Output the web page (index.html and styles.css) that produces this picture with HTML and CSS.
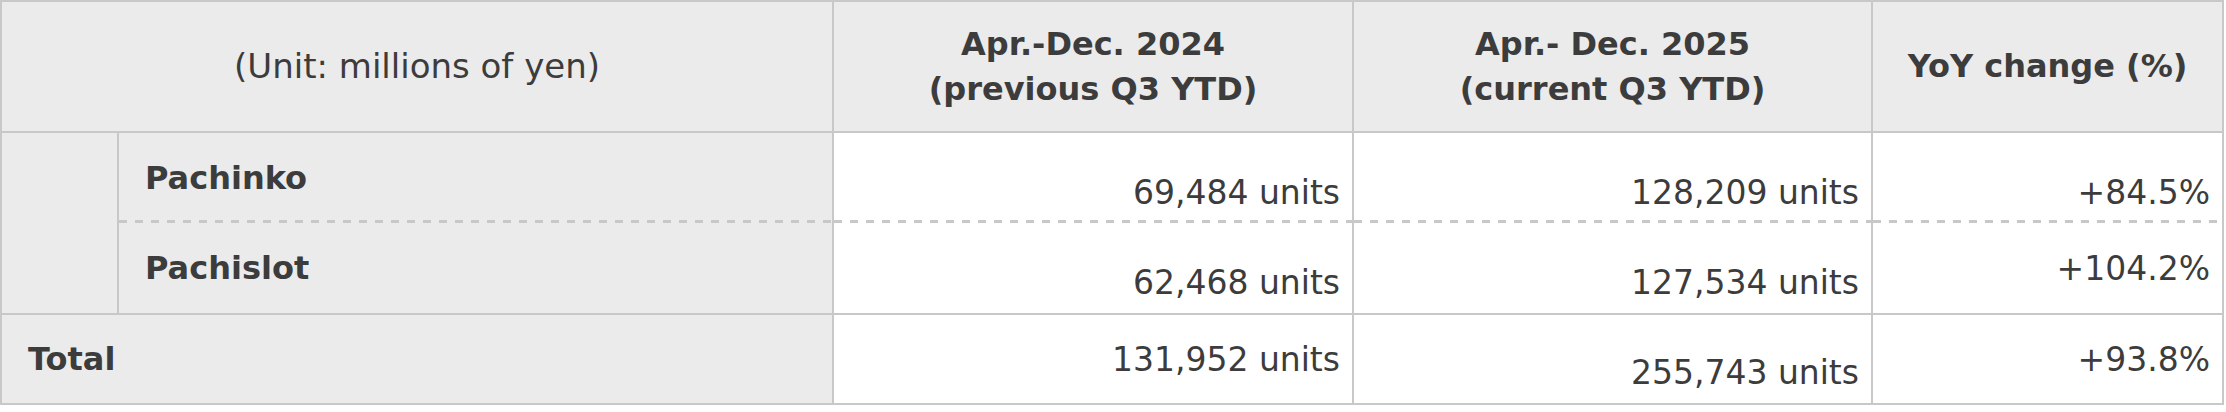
FILE: index.html
```html
<!DOCTYPE html>
<html lang="en">
<head>
<meta charset="utf-8">
<title>Unit sales</title>
<link rel="stylesheet" href="styles.css">
</head>
<body>
<table class="sales">
  <colgroup>
    <col class="c-indent">
    <col class="c-label">
    <col class="c-prev">
    <col class="c-cur">
    <col class="c-yoy">
  </colgroup>
  <thead>
    <tr class="head-row">
      <th colspan="2" class="unit">(Unit: millions of yen)</th>
      <th>Apr.-Dec. 2024<br>(previous Q3 YTD)</th>
      <th>Apr.- Dec. 2025<br>(current Q3 YTD)</th>
      <th>YoY change (%)</th>
    </tr>
  </thead>
  <tbody>
    <tr class="row sub first">
      <td rowspan="2" class="indent"></td>
      <td class="label">Pachinko</td>
      <td class="num low">69,484 units</td>
      <td class="num low">128,209 units</td>
      <td class="num low">+84.5%</td>
    </tr>
    <tr class="row sub second">
      <td class="label">Pachislot</td>
      <td class="num low">62,468 units</td>
      <td class="num low">127,534 units</td>
      <td class="num">+104.2%</td>
    </tr>
    <tr class="row total">
      <td colspan="2" class="label total-label">Total</td>
      <td class="num">131,952 units</td>
      <td class="num low">255,743 units</td>
      <td class="num">+93.8%</td>
    </tr>
  </tbody>
</table>
</body>
</html>
```

FILE: styles.css
```css
html, body {
  margin: 0;
  padding: 0;
  background: #ffffff;
}

.sales {
  width: 2224px;
  table-layout: fixed;
  border-collapse: collapse;
  font-family: "DejaVu Sans", Verdana, sans-serif;
  color: #3c3c3c;
  font-size: 33px;
  line-height: 45px;
}

.c-indent { width: 117px; }
.c-label { width: 715px; }
.c-prev { width: 520px; }
.c-cur { width: 519px; }
.c-yoy { width: 351px; }

.sales th,
.sales td {
  border: 2px solid #c8c8c8;
  padding: 0 12px;
}

.head-row {
  height: 131px;
}

.sales .head-row th {
  background-color: #ebebeb;
  font-weight: bold;
  font-size: 32px;
  text-align: center;
  vertical-align: middle;
}

.sales .head-row th.unit {
  font-weight: normal;
  font-size: 34px;
}

.row {
  height: 91px;
}

.row.total {
  height: 90px;
}

.sales .indent {
  background-color: #ebebeb;
}

.sales .label {
  background-color: #ebebeb;
  font-weight: bold;
  font-size: 32px;
  text-align: left;
  vertical-align: middle;
  padding-left: 26px;
}

.sales .num {
  background-color: #ffffff;
  text-align: right;
  vertical-align: middle;
  white-space: nowrap;
}

.sales .num.low {
  vertical-align: bottom;
  padding-bottom: 8px;
}

/* dashed divider between the two sub rows */
.sales .sub.first .label,
.sales .sub.first .num {
  border-bottom: none;
  background-image: linear-gradient(to right, #c8c8c8 8px, transparent 8px);
  background-size: 16px 3px;
  background-repeat: repeat-x;
  background-position: 0 100%;
}

.sales .sub.second .label,
.sales .sub.second .num {
  border-top: none;
}
```
